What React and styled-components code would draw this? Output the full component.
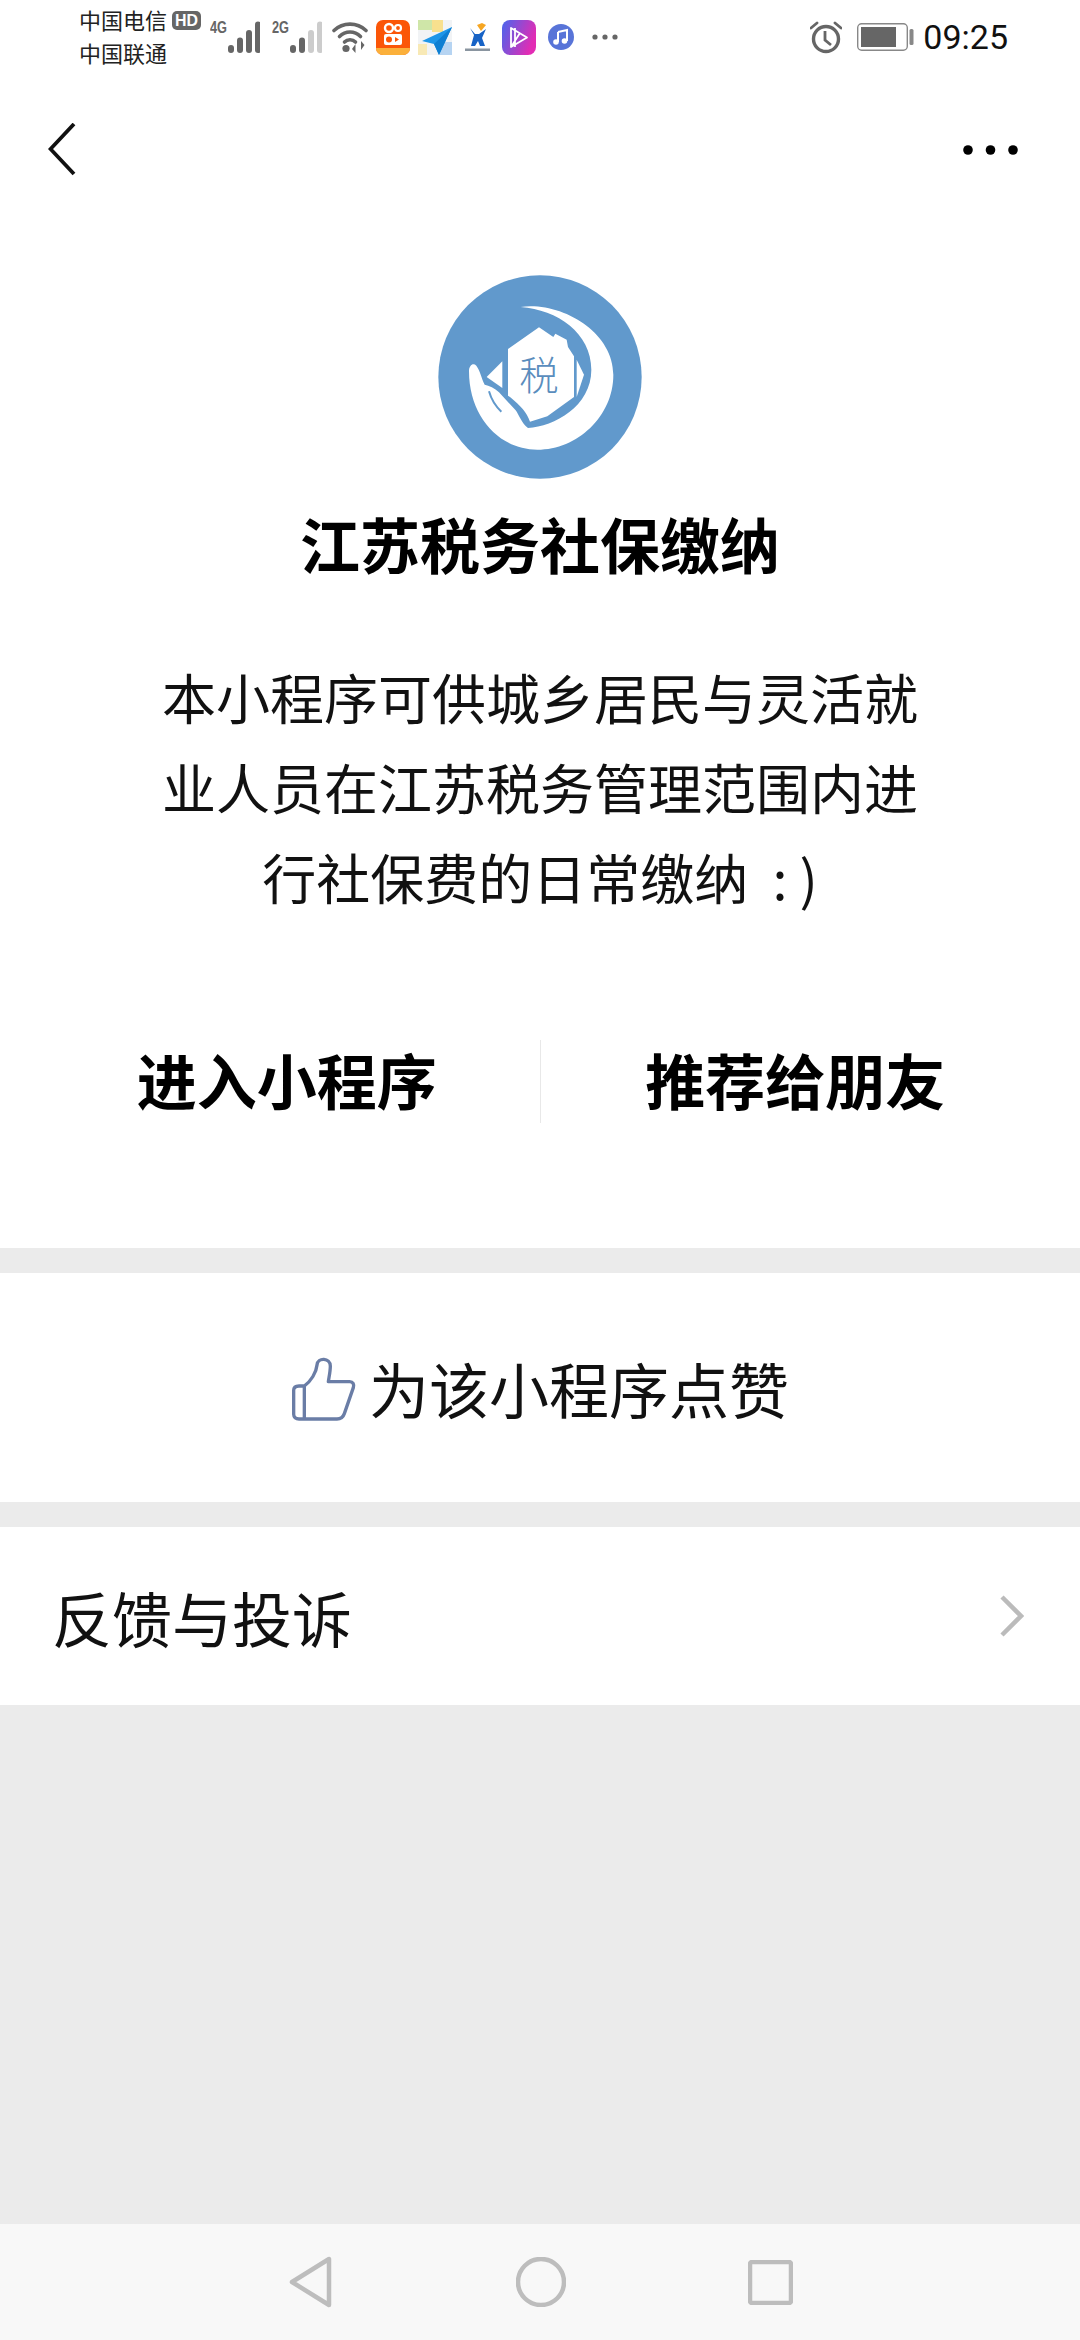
import React from "react";
import styled, { createGlobalStyle } from "styled-components";

const Global = createGlobalStyle`
  html, body { margin: 0; padding: 0; background: #ebebeb; }
  * { box-sizing: border-box; }
`;
const cjk = `"Noto Sans CJK SC", "Noto Sans", sans-serif`;

const Page = styled.div`
  width: 1080px; height: 2340px; display: flex; flex-direction: column;
  background: #ebebeb; font-family: ${cjk}; color: #000; overflow: hidden;
`;
const StatusBar = styled.div`
  height: 72px; flex: none; background: #fff; display: flex; align-items: flex-start;
  padding: 0 72px 0 79px;
`;
const Carriers = styled.div`
  width: 93px; display: flex; flex-direction: column; font-size: 22px; line-height: 33px;
  color: #222; padding-top: 3px;
`;
const StatusIcons = styled.div`
  display: flex; align-items: center; height: 36px; margin-top: 19px;
`;
const Glyph = styled.svg`
  display: block; flex: none; margin-left: ${p => p.$gap || 0}px;
`;
const HdBadge = styled(Glyph)`
  align-self: flex-start; margin-top: -8px;
`;
const StatusRight = styled.div`
  margin-left: auto; display: flex; align-items: center; height: 36px; margin-top: 19px;
`;
const Clock = styled.span`
  font-family: Roboto, sans-serif; font-size: 34px; color: #111; margin-left: 9px; line-height: 36px;
`;
const White = styled.div`
  background: #fff; flex: none;
`;
const Header = styled(White)`
  height: 156px; display: flex; align-items: center; justify-content: space-between;
  padding: 0 61px 0 48px;
`;
const Intro = styled(White)`
  display: flex; flex-direction: column; align-items: center; padding-bottom: 125px;
`;
const Logo = styled.svg`
  display: block; margin-top: 47px;
`;
const Title = styled.h1`
  margin: 19px 0 0; font-size: 60px; line-height: 90px; font-weight: 700; color: #000;
`;
const Description = styled.p`
  margin: 64px 0 0; width: 770px; font-size: 54px; line-height: 90px; text-align: center; color: #111; font-weight: 400;
`;
const Actions = styled.div`
  margin-top: 118px; width: 1016px; height: 83px; display: grid; grid-template-columns: 1fr 1px 1fr; align-items: center;
`;
const Action = styled.div`
  text-align: center; font-size: 60px; line-height: 76px; font-weight: 700; color: #000; padding: 0 0 5px 2px;
`;
const Divider = styled.div`
  height: 83px; background: #e8e8e8;
`;
const LikeRow = styled(White)`
  margin-top: 25px; height: 229px; display: flex; align-items: center; justify-content: center; gap: 12px;
  font-size: 60px; color: #111;
`;
const FeedbackRow = styled(White)`
  margin-top: 25px; height: 178px; display: flex; align-items: center; justify-content: space-between;
  padding: 0 56px 0 52px; font-size: 60px; color: #111;
`;
const Filler = styled.div`
  flex: 1;
`;
const NavBar = styled.div`
  height: 116px; flex: none; background: #f8f8f8; display: flex; align-items: center; justify-content: center;
  padding-left: 1px;
`;

const Signal = ({ label, level, gap }) => (
  <Glyph $gap={gap} width="50" height="36" viewBox="0 0 50 36">
    <text x="0" y="14" fontFamily="Liberation Sans, sans-serif" fontWeight="700" fontSize="16" fill="#666" textLength="17" lengthAdjust="spacingAndGlyphs">{label}</text>
    {[0, 1, 2, 3].map(i => (
      <rect key={i} x={18 + i * 9} y={26 - i * 7.5 - (i === 3 ? 1 : 0)} width="6" height={8 + i * 7.5 + (i === 3 ? 1 : 0)} rx="3" fill={i < level ? "#666" : "#ccc"} />
    ))}
  </Glyph>
);

export default function App() {
  return (
    <Page>
      <Global />
      <StatusBar>
        <Carriers><span>中国电信</span><span>中国联通</span></Carriers>
        <StatusIcons>
          <HdBadge width="29" height="19" viewBox="0 0 29 19">
            <rect width="29" height="19" rx="5" fill="#666" />
            <text x="14.5" y="15" textAnchor="middle" fontFamily="Liberation Sans, sans-serif" fontWeight="700" fontSize="16" fill="#fff" textLength="23" lengthAdjust="spacingAndGlyphs">HD</text>
          </HdBadge>
          <Signal label="4G" level={4} gap={9} />
          <Signal label="2G" level={2} gap={12} />
          <Glyph $gap={10} width="36" height="32" viewBox="0 0 36 32">
            <g fill="none" stroke="#666" strokeWidth="3.6" strokeLinecap="round">
              <path d="M2 9.5C11 1 25 1 34 9.5" />
              <path d="M7.5 15.5C13.5 9.5 22.5 9.5 28.5 15.5" />
              <path d="M12.5 21C15.5 18 20.5 18 23.5 21" />
            </g>
            <circle cx="14" cy="27.5" r="3.6" fill="#666" />
            <path d="M23.5 32V23l-3.5 5zM29 20v9l3.500-5z" fill="#666" />
          </Glyph>
          <Glyph $gap={8} width="34" height="35" viewBox="0 0 34 35">
            <rect width="34" height="35" rx="7" fill="#fb5608" />
            <path d="M0 28h34a7 7 0 0 1-7 7H7a7 7 0 0 1-7-7z" fill="#fbb03b" />
            <circle cx="13" cy="8" r="4" fill="none" stroke="#fff" strokeWidth="2.4" />
            <circle cx="22" cy="8" r="3" fill="none" stroke="#fff" strokeWidth="2.2" />
            <rect x="8" y="14" width="18" height="11" rx="2" fill="#fff" />
            <circle cx="13" cy="19.500" r="3" fill="#fb5608" />
            <path d="M19 17l4 2.500-4 2.500z" fill="#fb5608" />
          </Glyph>
          <Glyph $gap={8} width="34" height="35" viewBox="0 0 34 35">
            <rect width="34" height="35" fill="#f1f3f5" />
            <rect x="0" y="0" width="14" height="10" fill="#cfe6a8" />
            <rect x="14" y="0" width="11" height="12" fill="#f8e08e" />
            <rect x="0" y="24" width="9" height="11" fill="#f8e9b5" />
            <rect x="22" y="22" width="12" height="13" fill="#b6d4f2" />
            <path d="M34 7L4 21l12 3 5 11z" fill="#1e96e8" />
            <path d="M34 7L16 24l5 11z" fill="#0f7fd2" />
          </Glyph>
          <Glyph $gap={12} width="27" height="30" viewBox="0 0 27 30">
            <path d="M13 3l5-2 4 2-5 6z" fill="#f6a623" />
            <path d="M6 6l5 6 4 0 7-5-4 9 3 8h-5l-2-5-3 5H7l3-11z" fill="#1763c6" />
            <rect x="1" y="26.500" width="25" height="2.500" fill="#8a95a0" />
          </Glyph>
          <Glyph $gap={11} width="34" height="35" viewBox="0 0 34 35">
            <defs>
              <linearGradient id="vg" x1="0" y1="0" x2="1" y2="0.400">
                <stop offset="0" stopColor="#4866ee" />
                <stop offset="1" stopColor="#e22cb4" />
              </linearGradient>
            </defs>
            <rect width="34" height="35" rx="8" fill="url(#vg)" />
            <path d="M9 8l16 9.500L9 27zM13 8v19M9 27l9-14" fill="none" stroke="#fff" strokeWidth="1.800" strokeLinejoin="round" />
          </Glyph>
          <Glyph $gap={12} width="26" height="26" viewBox="0 0 26 26">
            <circle cx="13" cy="13" r="13" fill="#5874d8" />
            <path d="M10 8l9-2v11" fill="none" stroke="#fff" strokeWidth="2" />
            <circle cx="8" cy="18" r="2.800" fill="#fff" />
            <circle cx="16.500" cy="17" r="2.800" fill="#fff" />
            <path d="M10 8v10" stroke="#fff" strokeWidth="2" />
          </Glyph>
          <Glyph $gap={18} width="26" height="6" viewBox="0 0 26 6">
            <circle cx="3" cy="3" r="2.600" fill="#666" />
            <circle cx="13" cy="3" r="2.600" fill="#666" />
            <circle cx="23" cy="3" r="2.600" fill="#666" />
          </Glyph>
        </StatusIcons>
        <StatusRight>
          <Glyph width="32" height="33" viewBox="0 0 32 33">
            <circle cx="16" cy="18" r="12.500" fill="none" stroke="#666" strokeWidth="3.400" />
            <path d="M15 10v9l6 5" fill="none" stroke="#666" strokeWidth="2.800" />
            <path d="M1 7l6-5M31 7l-6-5" stroke="#666" strokeWidth="2.800" strokeLinecap="round" />
          </Glyph>
          <Glyph $gap={15} width="57" height="28" viewBox="0 0 57 28">
            <rect x="0.700" y="0.700" width="49.600" height="26.600" rx="4" fill="none" stroke="#888" strokeWidth="1.400" />
            <rect x="4" y="4" width="35" height="20" fill="#666" />
            <rect x="52.500" y="6" width="4" height="16" rx="1.500" fill="#888" />
          </Glyph>
          <Clock>09:25</Clock>
        </StatusRight>
      </StatusBar>

      <Header>
        <Glyph width="28" height="54" viewBox="0 0 28 54">
          <path d="M26 1L2.500 26 26 51" fill="none" stroke="#111" strokeWidth="3.800" />
        </Glyph>
        <Glyph width="56" height="10" viewBox="0 0 56 10">
          <circle cx="5" cy="5" r="4.800" fill="#000" />
          <circle cx="27.500" cy="5" r="4.800" fill="#000" />
          <circle cx="50" cy="5" r="4.800" fill="#000" />
        </Glyph>
      </Header>

      <Intro>
        <Logo width="204" height="204" viewBox="52 46 612 612">
          <circle cx="358" cy="352" r="305" fill="#6199cc" />
          <path d="M300 142C420 125 578 215 578 345C578 470 470 570 350 570C235 570 145 470 145 335C145 316 158 308 167 318C178 332 182 355 192 375C205 378 222 385 235 398L285 452C295 465 302 490 322 505C400 500 512 440 512 330C512 220 410 150 300 142Z" fill="#fff" />
          <path d="M262 268L355 203 398 232 404 222 438 240 442 262 460 290V412L380 470 328 486C318 458 300 438 268 412L262 408Z" fill="#fff" />
          <path d="M198 352L245 305V385Z" fill="#fff" />
          <path d="M468 300L490 345 468 412Z" fill="#fff" />
          <path d="M205 395C212 420 225 440 242 456" fill="none" stroke="#6199cc" strokeWidth="6" />
          <text x="355" y="390" textAnchor="middle" fontFamily={cjk} fontSize="118" fontWeight="300" fill="#5a8dbd">税</text>
        </Logo>
        <Title>江苏税务社保缴纳</Title>
        <Description>本小程序可供城乡居民与灵活就业人员在江苏税务管理范围内进行社保费的日常缴纳{"\u00a0\u00a0:\u00a0)"}</Description>
        <Actions>
          <Action>进入小程序</Action>
          <Divider />
          <Action>推荐给朋友</Action>
        </Actions>
      </Intro>

      <LikeRow>
        <Glyph width="66" height="66" viewBox="60 72 198 198">
          <path d="M100 165C120 150 136 125 138 102C140 78 178 80 178 105C178 122 174 138 172 152H236C246 152 250 160 247 170L220 248C216 260 208 264 198 264H84C74 264 68 258 68 250V178C68 170 74 165 84 165H100V264" fill="none" stroke="#6a7da6" strokeWidth="10" strokeLinejoin="round" />
        </Glyph>
        为该小程序点赞
      </LikeRow>
      <FeedbackRow>
        反馈与投诉
        <Glyph width="24" height="42" viewBox="0 0 24 42">
          <path d="M2 2L21 21 2 40" fill="none" stroke="#bbb" strokeWidth="4.500" />
        </Glyph>
      </FeedbackRow>
      <Filler />
      <NavBar>
        <Glyph width="44" height="52" viewBox="0 0 44 52">
          <path d="M40 3V49L3 26Z" fill="none" stroke="#bdbdbd" strokeWidth="4.500" strokeLinejoin="round" />
        </Glyph>
        <Glyph $gap={183} width="50" height="50" viewBox="0 0 50 50">
          <circle cx="25" cy="25" r="23" fill="none" stroke="#bdbdbd" strokeWidth="4.500" />
        </Glyph>
        <Glyph $gap={182} width="45" height="45" viewBox="0 0 45 45">
          <rect x="2" y="2" width="41" height="41" rx="2" fill="none" stroke="#bdbdbd" strokeWidth="4.500" />
        </Glyph>
      </NavBar>
    </Page>
  );
}
